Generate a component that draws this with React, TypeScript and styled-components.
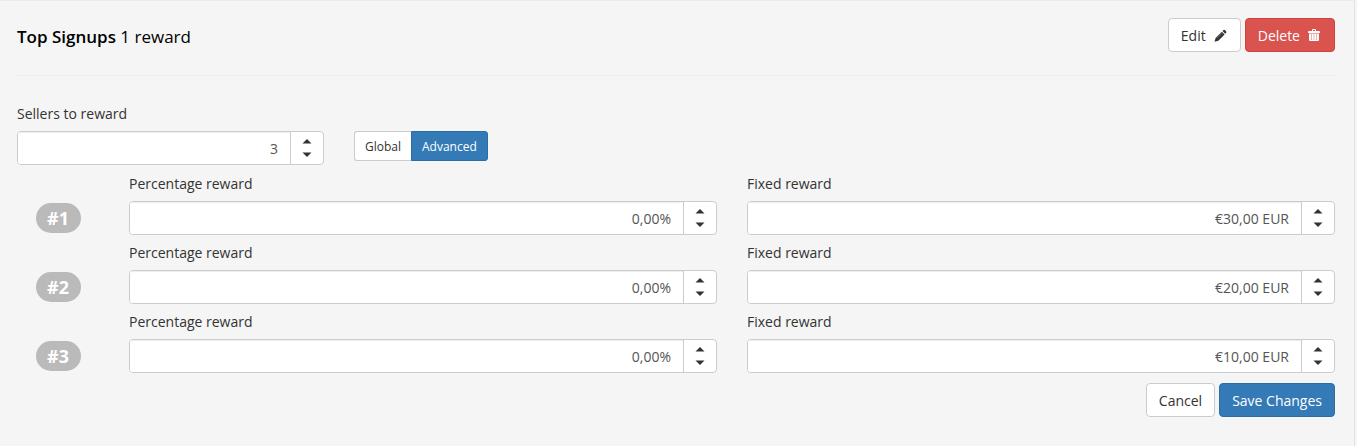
import React, { useState } from "react";
import styled, { createGlobalStyle, css } from "styled-components";

const GlobalStyle = createGlobalStyle`
  *, *::before, *::after { box-sizing: border-box; }
  body {
    margin: 0;
    background: #f5f5f5;
    color: #333;
    font-family: "Open Sans", "Liberation Sans", sans-serif;
    font-size: 14px;
    line-height: 20px;
  }
  button, input { font: inherit; }
`;

const Page = styled.div`
  padding-right: 2px;
`;

const Panel = styled.main`
  min-height: 100vh;
  padding: 17px 19px 28px 17px;
  border-top: 1px solid #ececec;
  border-right: 1px solid #e3e3e3;
  background: #f5f5f5;
`;

const Header = styled.header`
  display: flex;
  align-items: center;
  justify-content: space-between;
  padding-bottom: 23px;
  border-bottom: 1px solid #eee;
`;

const Title = styled.h1`
  margin: 0;
  padding-top: 4px;
  color: #000;
  font-size: 17px;
  font-weight: 400;
  line-height: 24px;
  strong { font-weight: 600; }
`;

const Actions = styled.div`
  display: flex;
  justify-content: flex-end;
  gap: 4px;
`;

type Tone = "plain" | "danger" | "primary";

const tones = {
  plain: css`background: #fff; border-color: #ccc; color: #333;`,
  danger: css`background: #d9534f; border-color: #d43f3a; color: #fff;`,
  primary: css`background: #337ab7; border-color: #2e6da4; color: #fff;`,
};

const Button = styled.button<{ $tone: Tone }>`
  display: inline-flex;
  align-items: center;
  gap: 8px;
  height: 34px;
  padding: 2px 12px 0;
  border: 1px solid;
  border-radius: 4px;
  cursor: pointer;
  ${({ $tone }) => tones[$tone]}
`;

const Icon = styled.svg`
  width: 14px;
  height: 14px;
  fill: currentColor;
`;

const Settings = styled.div`
  display: grid;
  grid-template-columns: repeat(4, minmax(0, 1fr));
  column-gap: 30px;
  align-items: end;
  padding-top: 28px;
`;

const ToggleGroup = styled.div`
  display: flex;
  height: 34px;
`;

const Toggle = styled.button<{ $active: boolean }>`
  height: 30px;
  padding: 2px 10px 0;
  border: 1px solid;
  font-size: 12px;
  line-height: 18px;
  cursor: pointer;
  ${({ $active }) => ($active ? tones.primary : tones.plain)}
  &:first-child { border-radius: 3px 0 0 3px; border-right: 0; }
  &:last-child { border-radius: 0 3px 3px 0; }
`;

const FieldBox = styled.div`
  display: flex;
  flex-direction: column;
  gap: 7px;
`;

const Label = styled.label`
  line-height: 20px;
`;

const InputGroup = styled.div`
  display: flex;
  height: 34px;
  overflow: hidden;
  border: 1px solid #ccc;
  border-radius: 4px;
  background: #fff;
`;

const TextInput = styled.input`
  flex: 1;
  min-width: 0;
  padding: 1px 12px 0;
  border: 0;
  outline: 0;
  background: #fff;
  box-shadow: inset 0 1px 1px rgba(0, 0, 0, 0.075);
  color: #555;
  text-align: right;
`;

const Stepper = styled.div`
  display: flex;
  flex-direction: column;
  width: 33px;
  padding: 3px 0;
  border-left: 1px solid #ccc;
`;

const StepButton = styled.button`
  display: flex;
  flex: 1;
  align-items: center;
  justify-content: center;
  padding: 0;
  border: 0;
  background: transparent;
  color: #333;
  cursor: pointer;
`;

const Caret = styled.svg`
  width: 10px;
  height: 5px;
  fill: currentColor;
`;

const RewardList = styled.ol`
  margin: 0;
  padding: 9px 0 0;
  list-style: none;
`;

const RewardRow = styled.li`
  display: grid;
  grid-template-columns: 82px repeat(2, minmax(0, 1fr));
  column-gap: 30px;
  align-items: end;
  padding-bottom: 8px;
`;

const Rank = styled.span`
  justify-self: center;
  min-width: 45px;
  margin-bottom: 2px;
  border-radius: 15px;
  background: #bababa;
  color: #fff;
  font-size: 18px;
  font-weight: 700;
  line-height: 30px;
  text-align: center;
`;

const Footer = styled.footer`
  padding-top: 2px;
`;

interface FieldProps {
  id: string;
  label: string;
  value: string;
}

function Field({ id, label, value }: FieldProps) {
  return (
    <FieldBox>
      <Label htmlFor={id}>{label}</Label>
      <InputGroup>
        <TextInput id={id} type="text" defaultValue={value} />
        <Stepper>
          <StepButton type="button" aria-label={`Increase ${label}`}>
            <Caret viewBox="0 0 10 5"><path d="M.5 4.600 5 0l4.500 4.600z" /></Caret>
          </StepButton>
          <StepButton type="button" aria-label={`Decrease ${label}`}>
            <Caret viewBox="0 0 10 5"><path d="M.5.4 5 5 9.500.4z" /></Caret>
          </StepButton>
        </Stepper>
      </InputGroup>
    </FieldBox>
  );
}

const rewards = [
  { rank: 1, percentage: "0,00%", fixed: "€30,00 EUR" },
  { rank: 2, percentage: "0,00%", fixed: "€20,00 EUR" },
  { rank: 3, percentage: "0,00%", fixed: "€10,00 EUR" },
];

export default function App() {
  const [mode, setMode] = useState("Advanced");
  return (
    <Page>
      <GlobalStyle />
      <Panel>
        <Header>
          <Title><strong>Top Signups</strong> 1 reward</Title>
          <Actions>
            <Button type="button" $tone="plain">
              Edit
              <Icon viewBox="0 0 14 14" aria-hidden="true">
                <path d="M9.300 1.300Q10.200.4 11.100 1.300L12 2.200Q12.900 3.100 12 4L11.200 4.800 8.500 2.100ZM7.900 2.700l2.700 2.700-6.300 6.300L.5 12.800 1.600 9z" />
                <path d="M3 9.200 8.300 3.900" fill="none" stroke="#fff" strokeOpacity=".45" strokeWidth=".6" />
              </Icon>
            </Button>
            <Button type="button" $tone="danger">
              Delete
              <Icon viewBox="0 0 14 14" aria-hidden="true">
                <path d="M4 2V1q0-1 1-1h2q1 0 1 1v1h3q1 0 1 1v1H0V3q0-1 1-1zM5 1v1h2V1z" fillRule="evenodd" />
                <path d="M1 4.500h10V11q0 1-1 1H2q-1 0-1-1z" />
                <path d="M3.500 5v6M6 5v6M8.500 5v6" fill="none" stroke="#d9534f" strokeOpacity=".55" strokeWidth=".8" />
              </Icon>
            </Button>
          </Actions>
        </Header>
        <Settings>
          <Field id="sellers" label="Sellers to reward" value="3" />
          <ToggleGroup role="group" aria-label="Reward mode">
            {["Global", "Advanced"].map((name) => (
              <Toggle
                key={name}
                type="button"
                $active={mode === name}
                aria-pressed={mode === name}
                onClick={() => setMode(name)}
              >
                {name}
              </Toggle>
            ))}
          </ToggleGroup>
        </Settings>
        <RewardList>
          {rewards.map(({ rank, percentage, fixed }) => (
            <RewardRow key={rank}>
              <Rank>#{rank}</Rank>
              <Field id={`percentage-${rank}`} label="Percentage reward" value={percentage} />
              <Field id={`fixed-${rank}`} label="Fixed reward" value={fixed} />
            </RewardRow>
          ))}
        </RewardList>
        <Footer>
          <Actions>
            <Button type="button" $tone="plain">Cancel</Button>
            <Button type="button" $tone="primary">Save Changes</Button>
          </Actions>
        </Footer>
      </Panel>
    </Page>
  );
}
